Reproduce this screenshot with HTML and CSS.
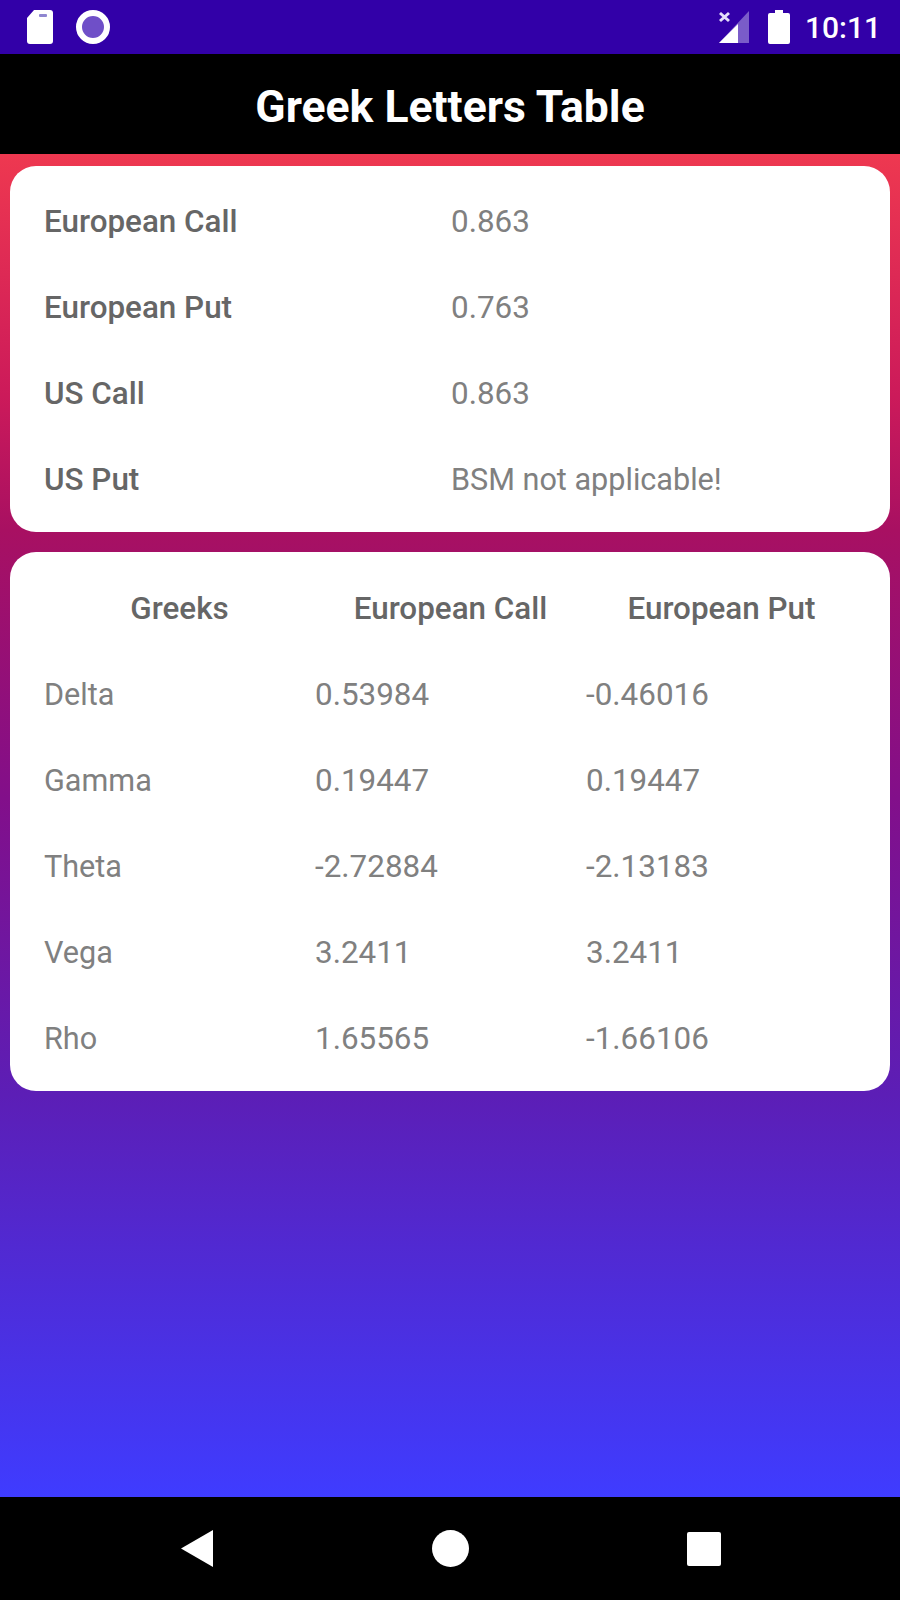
FILE: index.html
```html
<!DOCTYPE html>
<html lang="en">
<head>
    <meta charset="UTF-8">
    <meta name="viewport" content="width=device-width, initial-scale=1.0">
    <title>Greek Letters Table</title>
    <link rel="stylesheet" href="styles.css">
</head>
<body>
    <div class="screen">
        <div class="status-bar">
            <div class="status-left">
                <svg class="icon-sd" viewBox="0 0 28 36">
                    <path d="M8 1H24Q27 1 27 4V32Q27 35 24 35H4Q1 35 1 32V9Z" fill="#fff"/>
                    <rect x="13" y="5" width="8" height="3" rx="1" fill="#8f86d0"/>
                </svg>
                <svg class="icon-record" viewBox="0 0 36 36">
                    <circle cx="18" cy="18" r="14" fill="#6f4fc8" stroke="#fff" stroke-width="6"/>
                </svg>
            </div>
            <div class="status-right">
                <svg class="icon-signal" viewBox="0 0 32 34">
                    <path d="M31 1V33H1Z" fill="#7a5cc9"/>
                    <path d="M20 14V33H1Z" fill="#fff"/>
                    <path d="M2 3L11 11M11 3L2 11" stroke="#e4defa" stroke-width="3" fill="none"/>
                </svg>
                <svg class="icon-battery" viewBox="0 0 22 34">
                    <path d="M7 0H15V3H20Q22 3 22 5V32Q22 34 20 34H2Q0 34 0 32V5Q0 3 2 3H7Z" fill="#fff"/>
                </svg>
                <span class="clock">10:11</span>
            </div>
        </div>

        <header class="app-bar">Greek Letters Table</header>

        <main class="content">
            <section class="card prices">
                <div class="label">European Call</div>
                <div class="value">0.863</div>
                <div class="label">European Put</div>
                <div class="value">0.763</div>
                <div class="label">US Call</div>
                <div class="value">0.863</div>
                <div class="label">US Put</div>
                <div class="value word">BSM not applicable!</div>
            </section>

            <section class="card greeks">
                <div class="label head">Greeks</div>
                <div class="label head">European Call</div>
                <div class="label head">European Put</div>

                <div class="value word">Delta</div>
                <div class="value">0.53984</div>
                <div class="value">-0.46016</div>

                <div class="value word">Gamma</div>
                <div class="value">0.19447</div>
                <div class="value">0.19447</div>

                <div class="value word">Theta</div>
                <div class="value">-2.72884</div>
                <div class="value">-2.13183</div>

                <div class="value word">Vega</div>
                <div class="value">3.2411</div>
                <div class="value">3.2411</div>

                <div class="value word">Rho</div>
                <div class="value">1.65565</div>
                <div class="value">-1.66106</div>
            </section>
        </main>

        <nav class="nav-bar">
            <svg class="nav-back" viewBox="0 0 32 37"><path d="M32 0V37L0 18.5Z" fill="#fff"/></svg>
            <svg class="nav-home" viewBox="0 0 37 37"><circle cx="18.5" cy="18.5" r="18.5" fill="#fff"/></svg>
            <svg class="nav-recent" viewBox="0 0 34 34"><rect width="34" height="34" rx="2" fill="#fff"/></svg>
        </nav>
    </div>
</body>
</html>
```

FILE: styles.css
```css
html, body {
    margin: 0;
    padding: 0;
}

body {
    font-family: Roboto, "Noto Sans", sans-serif;
    background-color: #000;
}

.screen {
    width: 900px;
    height: 1600px;
    display: flex;
    flex-direction: column;
}

.status-bar {
    height: 54px;
    box-sizing: border-box;
    background-color: #3200a8;
    color: #fff;
    display: flex;
    justify-content: space-between;
    align-items: center;
    padding: 0 19px 0 26px;
}

.status-left,
.status-right {
    display: flex;
    align-items: center;
}

.icon-sd {
    width: 28px;
    height: 36px;
}

.icon-record {
    width: 36px;
    height: 36px;
    margin-left: 21px;
}

.icon-signal {
    width: 32px;
    height: 34px;
}

.icon-battery {
    width: 22px;
    height: 34px;
    margin-left: 18px;
}

.clock {
    font-size: 30px;
    font-weight: 500;
    margin-left: 15px;
}

.app-bar {
    height: 100px;
    box-sizing: border-box;
    padding-top: 6px;
    background-color: #000;
    color: #fff;
    font-size: 44.5px;
    font-weight: 700;
    display: flex;
    align-items: center;
    justify-content: center;
}

.content {
    flex: 1;
    background: linear-gradient(#ee3850 0%, #cc1a5a 18%, #a81062 28%, #820f8a 48%, #5c1eb6 70%, #3f3cff 100%);
    padding: 12px 10px;
    display: flex;
    flex-direction: column;
    gap: 20px;
}

.card {
    background-color: #fff;
    border-radius: 26px;
    display: grid;
    grid-auto-rows: 86px;
    align-items: center;
    font-size: 31.4px;
    line-height: 36px;
}

.prices {
    padding: 13px 34px 9px;
    grid-template-columns: 407px 1fr;
}

.greeks {
    padding: 14px 34px 9px;
    grid-template-columns: repeat(3, 271px);
}

.label {
    color: #666;
    font-weight: 500;
}

.value {
    color: #808080;
}

.word {
    font-size: 30.6px;
}

.head {
    text-align: center;
}

.nav-bar {
    height: 103px;
    background-color: #000;
    display: flex;
    align-items: center;
    justify-content: space-between;
    padding: 0 179px 0 181px;
}

.nav-back {
    width: 32px;
    height: 37px;
}

.nav-home {
    width: 37px;
    height: 37px;
}

.nav-recent {
    width: 34px;
    height: 34px;
}
```
